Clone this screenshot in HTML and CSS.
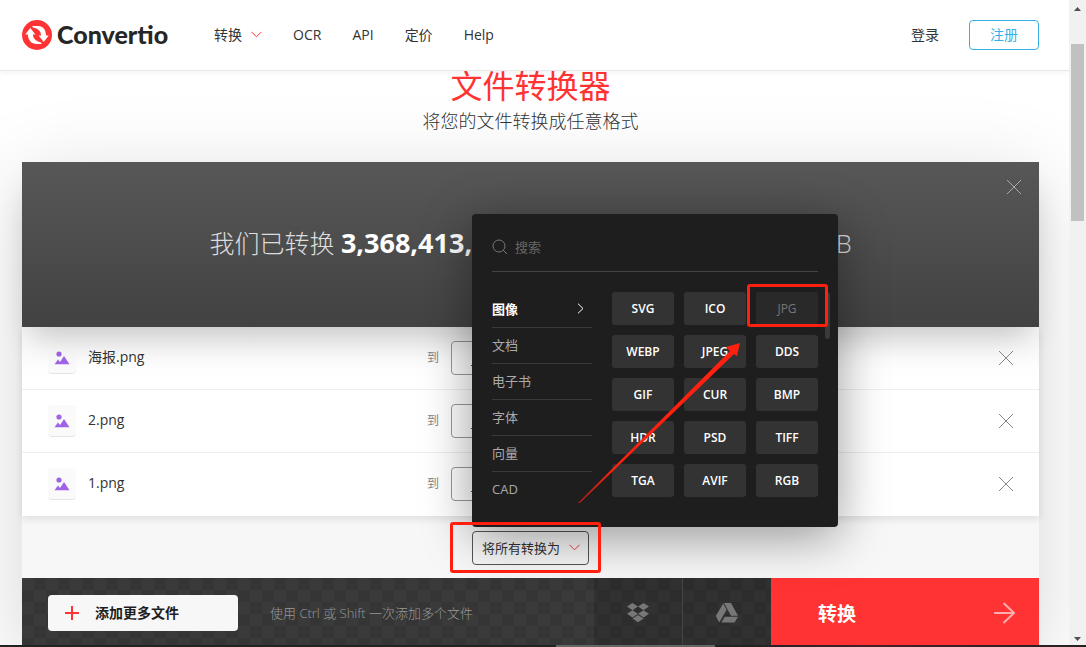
FILE: index.html
```html
<!DOCTYPE html>
<html lang="zh-CN">
  <head>
    <meta charset="UTF-8" />
    <meta name="viewport" content="width=device-width, initial-scale=1.0" />
    <title>Convertio</title>
    <link rel="stylesheet" href="styles.css">
  </head>
  <body>
    <div class="window">
      <div class="page">
        <header class="header">
          <a href="#" class="logo">
            <svg width="30" height="30" viewBox="0 0 30 30" aria-hidden="true">
              <circle cx="15" cy="15" r="15" fill="#ff3333" />
              <g fill="#fff">
                <path id="half" d="M8.3 8 3.2 14.6H5.9C6 19.8 9 23.9 13.6 23.9H18.8C20 23.9 20 23 19 22.4C14 21.6 11 18.5 10.9 14.6H13.4Z" />
                <use href="#half" transform="rotate(180 15 15)" />
              </g>
            </svg>
            <span>Convertio</span>
          </a>
          <nav class="nav">
            <a href="#" class="nav-convert">转换
              <svg class="chevron" width="11" height="7" viewBox="0 0 11 7"><path d="M.5.8 5.5 5.8 10.5.8" /></svg>
            </a>
            <a href="#">OCR</a>
            <a href="#">API</a>
            <a href="#">定价</a>
            <a href="#">Help</a>
          </nav>
          <div class="account">
            <a href="#">登录</a>
            <a href="#" class="signup">注册</a>
          </div>
        </header>

        <main class="main">
          <h1>文件转换器</h1>
          <p class="subtitle">将您的文件转换成任意格式</p>

          <section class="converter">
            <div class="banner">
              <p>我们已转换 <b>3,368,413,105</b> 个文件，总计大小 <b>82,131</b> TB</p>
              <button class="close banner-close" aria-label="关闭">
                <svg width="16" height="16" viewBox="0 0 16 16"><path d="M1 1 15 15M15 1 1 15" /></svg>
              </button>
            </div>

            <ul class="files">
              <li>
                <div class="file-name">
                  <span class="file-icon"><svg width="16" height="14" viewBox="0 0 16 14"><circle cx="5" cy="3" r="2.6" /><path d="M.5 13.3 4 8.5 6 11 10 5 15.5 13.3Z" /></svg></span>
                  <span class="name">海报.png</span>
                </div>
                <div class="file-target"><span>到</span> <button class="format">JPG</button></div>
                <button class="close" aria-label="删除"><svg width="16" height="16" viewBox="0 0 16 16"><path d="M1 1 15 15M15 1 1 15" /></svg></button>
              </li>
              <li>
                <div class="file-name">
                  <span class="file-icon"><svg width="16" height="14" viewBox="0 0 16 14"><circle cx="5" cy="3" r="2.6" /><path d="M.5 13.3 4 8.5 6 11 10 5 15.5 13.3Z" /></svg></span>
                  <span class="name">2.png</span>
                </div>
                <div class="file-target"><span>到</span> <button class="format">JPG</button></div>
                <button class="close" aria-label="删除"><svg width="16" height="16" viewBox="0 0 16 16"><path d="M1 1 15 15M15 1 1 15" /></svg></button>
              </li>
              <li>
                <div class="file-name">
                  <span class="file-icon"><svg width="16" height="14" viewBox="0 0 16 14"><circle cx="5" cy="3" r="2.6" /><path d="M.5 13.3 4 8.5 6 11 10 5 15.5 13.3Z" /></svg></span>
                  <span class="name">1.png</span>
                </div>
                <div class="file-target"><span>到</span> <button class="format">JPG</button></div>
                <button class="close" aria-label="删除"><svg width="16" height="16" viewBox="0 0 16 16"><path d="M1 1 15 15M15 1 1 15" /></svg></button>
              </li>
            </ul>

            <div class="convert-all">
              <div class="dropdown marked">
                <button class="dropdown-toggle">将所有转换为
                  <svg class="chevron" width="11" height="7" viewBox="0 0 11 7"><path d="M.5.8 5.5 5.8 10.5.8" /></svg>
                </button>
                <div class="menu">
                  <label class="search">
                    <svg width="16" height="16" viewBox="0 0 16 16"><circle cx="7" cy="7" r="6" /><path d="M11.3 11.3 15 15" /></svg>
                    <input type="text" placeholder="搜索" aria-label="搜索" />
                  </label>
                  <div class="menu-body">
                    <div class="categories">
                      <button class="active">图像 <svg width="7" height="11" viewBox="0 0 7 11"><path d="M1 .7 6 5.5 1 10.3" /></svg></button>
                      <button>文档</button>
                      <button>电子书</button>
                      <button>字体</button>
                      <button>向量</button>
                      <button>CAD</button>
                    </div>
                    <div class="formats">
                      <button>SVG</button>
                      <button>ICO</button>
                      <div class="marked"><button disabled>JPG</button></div>
                      <button>WEBP</button>
                      <button>JPEG</button>
                      <button>DDS</button>
                      <button>GIF</button>
                      <button>CUR</button>
                      <button>BMP</button>
                      <button>HDR</button>
                      <button>PSD</button>
                      <button>TIFF</button>
                      <button>TGA</button>
                      <button>AVIF</button>
                      <button>RGB</button>
                      <span class="menu-thumb"></span>
                    </div>
                  </div>
                  <svg class="arrow" viewBox="0 0 366 313" aria-hidden="true">
                    <defs>
                      <linearGradient id="fade" x1="0" y1="1" x2="1" y2="0">
                        <stop offset="0" stop-color="#ff2010" stop-opacity=".6" />
                        <stop offset=".2" stop-color="#ff2010" />
                      </linearGradient>
                    </defs>
                    <path fill="url(#fade)" d="M106 289 258 137 254 133 268 129 265 142 262 140 108 289Z" />
                  </svg>
                </div>
              </div>
            </div>

            <div class="actions">
              <div class="upload">
                <button class="add">
                  <svg width="14" height="14" viewBox="0 0 14 14"><path d="M7 0V14M0 7H14" /></svg>
                  <span>添加更多文件</span>
                </button>
                <span class="hint">使用 Ctrl 或 Shift 一次添加多个文件</span>
              </div>
              <button class="cloud" aria-label="Dropbox">
                <svg width="22" height="20" viewBox="0 0 22 20"><path d="M5.5 0 11 3.6 5.5 7.2 0 3.6ZM16.5 0 22 3.6 16.5 7.2 11 3.6ZM5.5 7.2 11 10.8 5.5 14.4 0 10.8ZM16.5 7.2 22 10.8 16.5 14.4 11 10.8ZM11 12 16.5 15.6 11 19.2 5.5 15.6Z" /></svg>
              </button>
              <button class="cloud" aria-label="Google Drive">
                <svg width="24" height="22" viewBox="0 1 24 22"><path d="M8.2 2.5.8 15l3.5 6.500 7.300-12.700zM9.700 15.700 6.300 21.500h13.200l3.500-5.800zM23 14.700 16 2H9l7 12.700z" /></svg>
              </button>
              <button class="convert">转换
                <svg width="21" height="22" viewBox="0 0 21 22"><path d="M0 11H20M9.500 1 20 11 9.500 21" /></svg>
              </button>
            </div>
          </section>
        </main>
      </div>

      <div class="scrollbar">
        <svg width="7" height="4" viewBox="0 0 7 4"><path d="M0 4 3.500 0 7 4Z" /></svg>
        <div class="track"><div class="thumb"></div></div>
        <svg width="7" height="4" viewBox="0 0 7 4"><path d="M0 0 3.500 4 7 0Z" /></svg>
      </div>
    </div>
    <div class="bottom-strip"><span></span></div>
  </body>
</html>
```

FILE: styles.css
```css
* {
  box-sizing: border-box;
}

body {
  margin: 0;
  height: 100vh;
  display: flex;
  flex-direction: column;
  overflow: hidden;
  font-family: "Open Sans", "Noto Sans CJK SC", sans-serif;
  font-size: 14px;
  color: #333;
  background: #fff;
}

h1,
p,
ul {
  margin: 0;
  padding: 0;
  font-weight: 300;
}

a {
  color: inherit;
  text-decoration: none;
}

button,
input {
  font-family: inherit;
  font-size: 13px;
  color: inherit;
  border: none;
  background: none;
  padding: 0;
}

svg {
  fill: none;
  flex-shrink: 0;
}

.window {
  flex: 1;
  min-height: 0;
  display: flex;
}

.page {
  flex: 1;
  overflow: hidden;
}

/* header */
.header {
  position: relative;
  z-index: 2;
  display: flex;
  align-items: center;
  height: 71px;
  padding: 0 30px 0 22px;
  background: #fff;
  border-bottom: 1px solid #e8e8e8;
  box-shadow: 0 2px 6px rgba(0, 0, 0, 0.05);
}

.logo {
  display: flex;
  align-items: center;
  gap: 5px;
  font-family: Lato, sans-serif;
  font-size: 25px;
  font-weight: 900;
  color: #262626;
}

.logo span {
  padding-bottom: 2px;
}

.nav {
  display: flex;
  align-items: baseline;
  gap: 31px;
  margin-left: 46px;
  padding-bottom: 2px;
}

.nav-convert {
  display: flex;
  align-items: center;
  gap: 9px;
}

.chevron {
  stroke: #ff3333;
}

.account {
  display: flex;
  align-items: baseline;
  gap: 30px;
  margin-left: auto;
}

.signup {
  width: 70px;
  line-height: 28px;
  text-align: center;
  color: #35b1e8;
  border: 1px solid #35b1e8;
  border-radius: 4px;
}

/* title */
.main {
  padding: 0 30px 0 22px;
  text-align: center;
}

h1 {
  font-size: 32px;
  font-weight: 400;
  line-height: 30px;
  color: #ff3333;
}

.subtitle {
  font-size: 18px;
  line-height: 40px;
}

.converter {
  margin-top: 21px;
  background: #f7f7f7;
  box-shadow: 0 20px 80px rgba(0, 0, 0, 0.17);
}

/* banner */
.banner {
  position: relative;
  display: flex;
  align-items: center;
  justify-content: center;
  height: 165px;
  padding-bottom: 4px;
  font-size: 25px;
  white-space: nowrap;
  color: #ddd;
  background: linear-gradient(#575757, #424242);
  box-shadow: 0 20px 30px -10px rgba(0, 0, 0, 0.2);
}

.banner b {
  font-size: 27px;
  font-weight: 700;
  color: #fff;
}

.close {
  display: flex;
}

.close svg {
  stroke: #888;
}

.banner-close {
  position: absolute;
  top: 17px;
  right: 17px;
}

.banner-close svg {
  stroke: #aaa;
}

/* files */
.files {
  list-style: none;
  background: linear-gradient(rgba(255, 255, 255, 0), #fff 50px);
  box-shadow: 0 3px 8px rgba(0, 0, 0, 0.1);
}

.files li {
  display: grid;
  grid-template-columns: 1fr 208px 1fr;
  align-items: center;
  height: 63px;
  padding: 0 25px 0 26px;
  font-weight: 400;
  border-bottom: 1px solid #eee;
}

.files li:last-child {
  border-bottom-color: transparent;
}

.file-name {
  display: flex;
  align-items: center;
  gap: 12px;
}

.name {
  padding-bottom: 4px;
}

.file-icon {
  display: flex;
  align-items: center;
  justify-content: center;
  width: 28px;
  height: 32px;
  background: #fafafa;
  border-bottom: 1px solid #e4e4e4;
  border-radius: 4px;
}

.file-icon svg {
  fill: #a163e6;
}

.file-target {
  display: flex;
  align-items: center;
  gap: 12px;
  font-size: 12px;
  color: #888;
}

.file-target span {
  padding-bottom: 2px;
}

.format {
  width: 92px;
  height: 34px;
  padding-left: 20px;
  text-align: left;
  color: #333;
  border: 1px solid #999;
  border-radius: 4px;
}

.files .close {
  justify-self: end;
}

/* convert all */
.convert-all {
  display: flex;
  justify-content: center;
  padding: 15px 0 13px;
}

.dropdown {
  position: relative;
}

.dropdown-toggle {
  display: flex;
  align-items: center;
  justify-content: space-between;
  width: 117px;
  height: 34px;
  padding: 0 8px 2px 9px;
  border: 1px solid #555;
  border-radius: 4px;
}

.menu {
  position: absolute;
  bottom: 38px;
  left: 0;
  width: 366px;
  padding: 13px 20px 19px;
  background: #1e1e1e;
  border-radius: 4px;
  box-shadow: 0 10px 50px rgba(0, 0, 0, 0.4);
}

.search {
  display: flex;
  align-items: center;
  gap: 7px;
  height: 45px;
  padding-bottom: 5px;
  border-bottom: 1px solid #444;
}

.search svg {
  stroke: #777;
}

.search input {
  flex: 1;
  min-width: 0;
  outline: none;
}

.search input::placeholder {
  color: #666;
}

.menu-body {
  display: flex;
  gap: 20px;
  margin-top: 20px;
}

.categories {
  width: 100px;
}

.categories button {
  display: flex;
  align-items: center;
  justify-content: space-between;
  width: 100%;
  height: 36px;
  padding: 0 8px 2px 0;
  color: #aaa;
  border-bottom: 1px solid #3a3a3a;
}

.categories button:last-child {
  border-bottom: none;
}

.categories .active {
  font-weight: 600;
  color: #fff;
}

.categories svg {
  stroke: #fff;
}

.formats {
  flex: 1;
  position: relative;
  display: grid;
  grid-template-columns: repeat(3, 1fr);
  grid-auto-rows: 33px;
  gap: 10px;
}

.formats button {
  width: 100%;
  height: 33px;
  font-size: 12px;
  font-weight: 600;
  color: #fff;
  background: #333;
  border-radius: 3px;
}

.formats button:disabled {
  font-weight: 400;
  color: #777;
  background: #292929;
}

.menu-thumb {
  position: absolute;
  top: 0;
  right: -12px;
  width: 5px;
  height: 47px;
  background: #3a3a3a;
  border-radius: 3px;
}

.arrow {
  position: absolute;
  top: 0;
  left: 0;
  width: 100%;
  z-index: 1;
  pointer-events: none;
}

/* red frames */
.marked {
  position: relative;
}

.marked::after {
  content: "";
  position: absolute;
  z-index: 1;
  inset: -8px -10px -2px -9px;
  border: 3px solid #ff2010;
  border-radius: 3px;
  pointer-events: none;
}

.dropdown.marked::after {
  inset: -9px -12px -8px -22px;
}

/* bottom actions */
.actions {
  display: flex;
  height: 70px;
  background: repeating-conic-gradient(#353535 0 25%, #3a3a3a 0 50%) 0 0 / 24px 24px;
}

.upload {
  flex: 1;
  display: flex;
  align-items: center;
  gap: 32px;
  padding-left: 26px;
}

.add {
  display: flex;
  align-items: center;
  gap: 16px;
  width: 190px;
  height: 36px;
  padding-left: 17px;
  font-size: 14px;
  font-weight: 700;
  color: #1e1e1e;
  background: #f7f7f7;
  border-radius: 4px;
}

.add svg {
  stroke: #ff3333;
  stroke-width: 2;
}

.add span {
  padding-bottom: 2px;
}

.hint {
  padding-bottom: 2px;
  font-size: 13px;
  font-weight: 300;
  color: #999;
}

.cloud {
  display: flex;
  align-items: center;
  justify-content: center;
  width: 88px;
  background: rgba(0, 0, 0, 0.15);
}

.cloud + .cloud {
  width: 89px;
  border-left: 1px solid #444;
}

.cloud svg {
  fill: #777;
}

.convert {
  display: flex;
  align-items: center;
  justify-content: space-between;
  width: 268px;
  padding: 0 24px 0 47px;
  font-size: 19px;
  font-weight: 700;
  color: #fff;
  background: #ff3333;
}

.convert svg {
  stroke: rgba(255, 255, 255, 0.6);
  stroke-width: 2;
}

/* page scrollbar */
.scrollbar {
  display: flex;
  flex-direction: column;
  align-items: center;
  width: 17px;
  padding: 7px 0 4px;
  background: #f1f1f1;
}

.scrollbar svg {
  fill: #505050;
}

.track {
  flex: 1;
  padding-top: 33px;
}

.thumb {
  width: 13px;
  height: 177px;
  background: #c1c1c1;
}

.bottom-strip {
  display: flex;
  justify-content: center;
  height: 2px;
  padding-left: 185px;
  background: linear-gradient(90deg, #222 70%, #4a2024 80%, #222);
}

.bottom-strip span {
  width: 159px;
  background: #666;
}
```
